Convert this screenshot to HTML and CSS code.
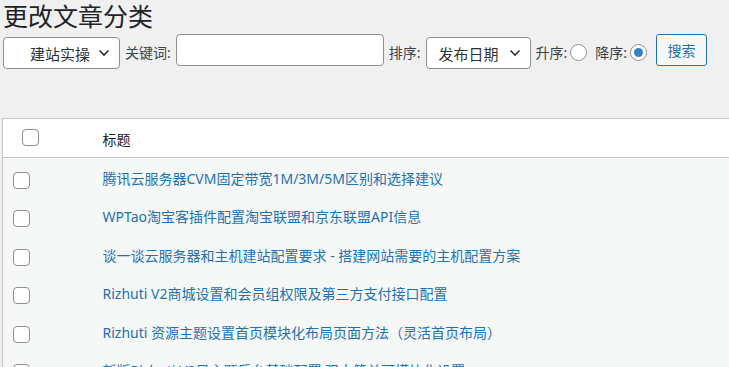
FILE: index.html
```html
<!DOCTYPE html>
<html lang="zh-CN">
<head>
   <meta charset="UTF-8">
   <meta name="viewport" content="width=device-width, initial-scale=1.0">
   <title>更改文章分类</title>
   <link rel="stylesheet" href="styles.css">
</head>
<body>
   <div class="wrap">
      <h1 class="page-title">更改文章分类</h1>
      <form class="filter-bar">
         <div class="select-box cat-select">
            <span class="select-text">建站实操</span>
            <svg class="chevron" width="12" height="8" viewBox="0 0 12 8"><path d="M1.5 1.5 L6 6 L10.5 1.5" fill="none" stroke="#2c3338" stroke-width="1.6"/></svg>
         </div>
         <label class="field-label" for="keyword">关键词:</label>
         <input class="text-input" type="text" id="keyword">
         <span class="field-label">排序:</span>
         <div class="select-box order-select">
            <span class="select-text">发布日期</span>
            <svg class="chevron" width="12" height="8" viewBox="0 0 12 8"><path d="M1.5 1.5 L6 6 L10.5 1.5" fill="none" stroke="#2c3338" stroke-width="1.6"/></svg>
         </div>
         <span class="field-label">升序:</span>
         <span class="radio"></span>
         <span class="field-label">降序:</span>
         <span class="radio checked"></span>
         <button type="button" class="search-button">搜索</button>
      </form>

      <table class="post-table">
         <thead>
            <tr>
               <th class="check-col head-check"><span class="checkbox"></span></th>
               <th class="title-col">标题</th>
            </tr>
         </thead>
         <tbody>
            <tr>
               <td class="check-col"><span class="checkbox"></span></td>
               <td class="title-col"><a href="#">腾讯云服务器CVM固定带宽1M/3M/5M区别和选择建议</a></td>
            </tr>
            <tr>
               <td class="check-col"><span class="checkbox"></span></td>
               <td class="title-col"><a href="#">WPTao淘宝客插件配置淘宝联盟和京东联盟API信息</a></td>
            </tr>
            <tr>
               <td class="check-col"><span class="checkbox"></span></td>
               <td class="title-col"><a href="#">谈一谈云服务器和主机建站配置要求 - 搭建网站需要的主机配置方案</a></td>
            </tr>
            <tr>
               <td class="check-col"><span class="checkbox"></span></td>
               <td class="title-col"><a href="#">Rizhuti V2商城设置和会员组权限及第三方支付接口配置</a></td>
            </tr>
            <tr>
               <td class="check-col"><span class="checkbox"></span></td>
               <td class="title-col"><a href="#">Rizhuti 资源主题设置首页模块化布局页面方法（灵活首页布局）</a></td>
            </tr>
            <tr>
               <td class="check-col"><span class="checkbox"></span></td>
               <td class="title-col"><a href="#">新版Rizhuti V2日主题后台基础配置 强大简单可模块化设置</a></td>
            </tr>
         </tbody>
      </table>
   </div>
</body>
</html>
```

FILE: styles.css
```css
html, body {
   overflow: hidden;
}

body {
   margin: 0;
   padding: 0;
   font-family: "Noto Sans", "Noto Sans CJK SC", sans-serif;
   font-size: 14px;
   background-color: #f0f0f1;
   color: #3c434a;
}

.wrap {
   padding-left: 3px;
}

.page-title {
   margin: 0;
   height: 34px;
   font-size: 25px;
   line-height: 32px;
   font-weight: 400;
   color: #1d2327;
}

.filter-bar {
   display: flex;
   align-items: flex-start;
   gap: 5px;
   height: 35px;
}

.select-box {
   box-sizing: border-box;
   height: 32px;
   margin-top: 3px;
   display: flex;
   align-items: center;
   justify-content: space-between;
   padding: 0 9px 0 12px;
   background-color: #fff;
   border: 1px solid #8c8f94;
   border-radius: 4px;
   font-size: 15px;
   color: #2c3338;
}

.cat-select {
   width: 117px;
   padding-left: 26px;
}

.order-select {
   width: 105px;
}

.field-label {
   line-height: 32px;
   margin-top: 3px;
   color: #3c434a;
}

.text-input {
   box-sizing: border-box;
   width: 208px;
   height: 32px;
   margin: 0;
   padding: 0 8px;
   background-color: #fff;
   border: 1px solid #8c8f94;
   border-radius: 4px;
   font-family: inherit;
   font-size: 14px;
}

.radio {
   box-sizing: border-box;
   width: 17px;
   height: 17px;
   margin: 10px 3px 0 -2px;
   border: 1px solid #8c8f94;
   border-radius: 50%;
   background-color: #fff;
   display: flex;
   align-items: center;
   justify-content: center;
}

.radio.checked::before {
   content: "";
   width: 9px;
   height: 9px;
   border-radius: 50%;
   background-color: #3582c4;
}

.search-button {
   box-sizing: border-box;
   width: 51px;
   height: 32px;
   margin-left: 1px;
   padding: 0;
   background-color: #f6f7f7;
   border: 1px solid #2271b1;
   border-radius: 3px;
   color: #2271b1;
   font-family: inherit;
   font-size: 14px;
}

.post-table {
   width: calc(100% + 20px);
   margin: 49px 0 0 -1px;
   border-collapse: collapse;
   border: 1px solid #c3c4c7;
   background-color: #f6f7f7;
}

.post-table thead tr {
   background-color: #fff;
   border-bottom: 1px solid #c3c4c7;
}

.post-table th {
   height: 38px;
   box-sizing: border-box;
   padding: 0;
   vertical-align: top;
   text-align: left;
   font-weight: 400;
}

.post-table td {
   padding: 9.5px 10px 8px;
   vertical-align: top;
   line-height: 21px;
}

.check-col {
   width: 90px;
   box-sizing: border-box;
}

.post-table td.check-col {
   padding-left: 10px;
}

.head-check {
   padding-left: 19px !important;
}

.post-table th.title-col {
   padding: 10px 10px 7px;
   line-height: 21px;
   color: #1d2327;
}

.checkbox {
   display: block;
   box-sizing: border-box;
   width: 17px;
   height: 17px;
   margin-top: 4px;
   background-color: #fff;
   border: 1px solid #8c8f94;
   border-radius: 4px;
}

.head-check .checkbox {
   margin-top: 10px;
}

.title-col a {
   color: #2271b1;
   text-decoration: none;
   white-space: nowrap;
}
```
